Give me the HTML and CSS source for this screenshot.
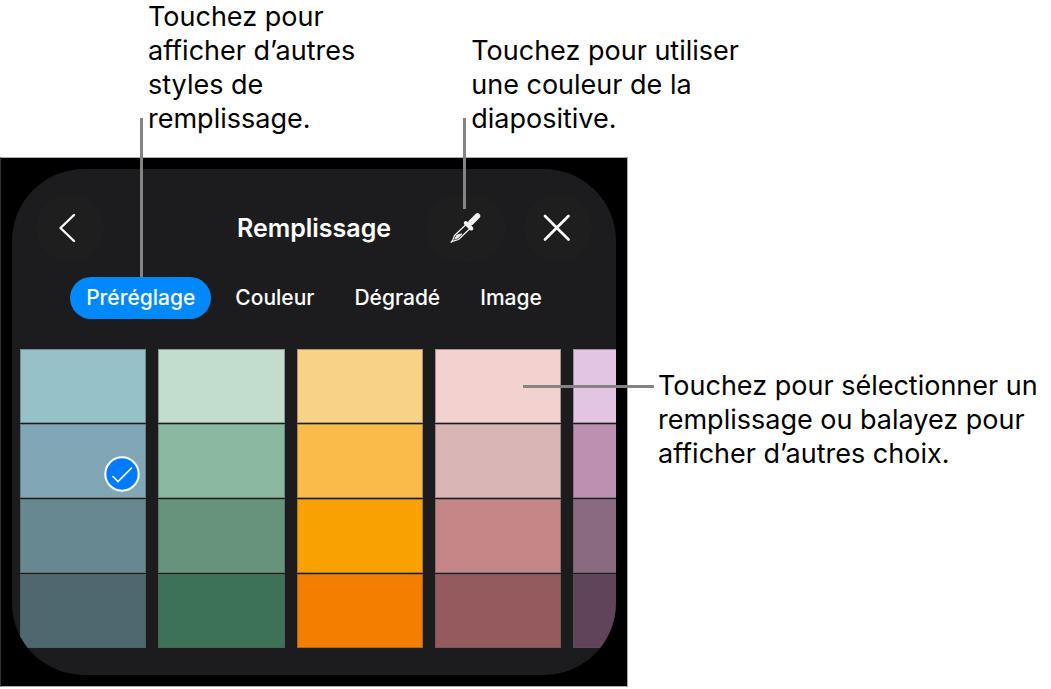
FILE: index.html
```html
<!DOCTYPE html>
<html lang="fr">
<head>
    <meta charset="utf-8">
    <title>Remplissage</title>
    <link rel="stylesheet" href="styles.css">
</head>
<body>
    <div class="figure">
        <div class="top-notes">
            <p class="note note-styles">Touchez pour<br>afficher d’autres<br>styles de<br>remplissage.</p>
            <p class="note note-picker">Touchez pour utiliser<br>une couleur de la<br>diapositive.</p>
        </div>

        <div class="device">
            <div class="sheet">
                <div class="header">
                    <button class="round-btn" aria-label="Retour">
                        <svg width="68" height="68" viewBox="0 0 68 68" fill="none" stroke="#fff" stroke-width="2.4" stroke-linecap="round" stroke-linejoin="round">
                            <path d="M38 21L24.500 34L38 47"/>
                        </svg>
                    </button>
                    <h1 class="title">Remplissage</h1>
                    <div class="header-actions">
                        <button class="round-btn picker-btn" aria-label="Pipette">
                            <svg width="80" height="68" viewBox="0 0 80 68" fill="none" stroke="#f4f4f4" stroke-linecap="round" stroke-linejoin="round">
                                <path d="M45 28.500L51.500 22" stroke-width="5.500"/>
                                <path d="M39.800 29L45.300 34.500" stroke-width="4"/>
                                <path d="M39.500 31L28.500 41.500L27 45.500L25 48.300L28 46.800L32.500 45.500L43.500 35" stroke-width="1.200"/>
                                <path d="M28.800 44.800L31 41L36 39.800L32 43.800Z" fill="#f4f4f4" stroke-width="0.800"/>
                            </svg>
                        </button>
                        <button class="round-btn" aria-label="Fermer">
                            <svg width="68" height="68" viewBox="0 0 68 68" fill="none" stroke="#fff" stroke-width="2.700" stroke-linecap="round">
                                <path d="M21 22L44.500 45.500M44.500 22L21 45.500"/>
                            </svg>
                        </button>
                    </div>
                </div>

                <div class="tabs">
                    <button class="tab active">Préréglage</button>
                    <button class="tab">Couleur</button>
                    <button class="tab">Dégradé</button>
                    <button class="tab">Image</button>
                </div>

                <div class="swatches">
                    <div class="column">
                        <button class="swatch blue-1" aria-label="Bleu 1"></button>
                        <button class="swatch blue-2" aria-label="Bleu 2">
                            <svg class="check" width="36" height="36" viewBox="0 0 36 36" fill="none" stroke="#fff">
                                <circle cx="18" cy="18" r="16.700" fill="#007bff" stroke-width="2"/>
                                <path d="M9 20.500L14 25.500L27.500 12" stroke-width="1.600" stroke-linecap="round"/>
                            </svg>
                        </button>
                        <button class="swatch blue-3" aria-label="Bleu 3"></button>
                        <button class="swatch blue-4" aria-label="Bleu 4"></button>
                    </div>
                    <div class="column">
                        <button class="swatch green-1" aria-label="Vert 1"></button>
                        <button class="swatch green-2" aria-label="Vert 2"></button>
                        <button class="swatch green-3" aria-label="Vert 3"></button>
                        <button class="swatch green-4" aria-label="Vert 4"></button>
                    </div>
                    <div class="column">
                        <button class="swatch orange-1" aria-label="Orange 1"></button>
                        <button class="swatch orange-2" aria-label="Orange 2"></button>
                        <button class="swatch orange-3" aria-label="Orange 3"></button>
                        <button class="swatch orange-4" aria-label="Orange 4"></button>
                    </div>
                    <div class="column">
                        <button class="swatch red-1" aria-label="Rouge 1"></button>
                        <button class="swatch red-2" aria-label="Rouge 2"></button>
                        <button class="swatch red-3" aria-label="Rouge 3"></button>
                        <button class="swatch red-4" aria-label="Rouge 4"></button>
                    </div>
                    <div class="column">
                        <button class="swatch purple-1" aria-label="Violet 1"></button>
                        <button class="swatch purple-2" aria-label="Violet 2"></button>
                        <button class="swatch purple-3" aria-label="Violet 3"></button>
                        <button class="swatch purple-4" aria-label="Violet 4"></button>
                    </div>
                </div>
            </div>
        </div>

        <p class="note note-swatch">Touchez pour sélectionner un<br>remplissage ou balayez pour<br>afficher d’autres choix.</p>
    </div>
</body>
</html>
```
FILE: styles.css
```css
* {
    box-sizing: border-box;
}
body {
    margin: 0;
    background: #fff;
    color: #000;
    font-family: Inter, "Liberation Sans", sans-serif;
}
button {
    padding: 0;
    border: none;
    color: #fff;
    font-family: inherit;
    cursor: pointer;
}
.figure {
    display: grid;
    grid-template-columns: minmax(0, 628px) 1fr;
    align-items: start;
}

/* Callouts */
.top-notes {
    grid-column: 1 / -1;
    display: flex;
    align-items: flex-end;
    gap: 116px;
    padding: 0 0 21px 148px;
}
.note {
    position: relative;
    margin: 0;
    font-size: 27px;
    line-height: 34px;
    white-space: nowrap;
}
.note::before {
    content: "";
    position: absolute;
    z-index: 1;
    background: #848484;
}
.note-styles::before {
    left: -8px;
    top: calc(100% - 18px);
    width: 3px;
    height: 159px;
}
.note-picker::before {
    left: -8px;
    top: calc(100% - 18px);
    width: 3px;
    height: 91px;
}
.note-swatch {
    margin-top: 212px;
    padding-left: 30px;
}
.note-swatch::before {
    left: -105px;
    top: 16px;
    width: 131px;
    height: 3px;
}

/* Panel */
.device {
    padding: 11px;
    background: #000;
    border: 1px solid #aaa;
    border-left-color: #333;
}
.sheet {
    overflow: hidden;
    padding: 25px 0 27px;
    background: #1c1c1e;
    border-radius: 72px;
}
.header {
    display: grid;
    grid-template-columns: 1fr auto 1fr;
    align-items: center;
    padding: 0 24px;
}
.title {
    margin: 0;
    color: #fff;
    font-size: 25px;
    font-weight: 600;
    line-height: 32px;
}
.header-actions {
    display: flex;
    justify-content: flex-end;
    gap: 18px;
}
.round-btn {
    width: 68px;
    height: 68px;
    background: #1e1e1e;
    border-radius: 34px;
}
.round-btn svg {
    display: block;
}
.picker-btn {
    width: 80px;
}
.tabs {
    display: flex;
    justify-content: center;
    gap: 8px;
    margin: 15px 0 30px;
}
.tab {
    height: 42px;
    padding: 0 16px 2px;
    background: none;
    border-radius: 21px;
    font-size: 21px;
    font-weight: 500;
}
.tab.active {
    background: #0088ff;
}

/* Colour grid */
.swatches {
    display: flex;
    gap: 12px;
    margin-left: 8px;
    overflow: hidden;
}
.column {
    display: flex;
    flex: 0 0 21.2%;
    flex-direction: column;
    gap: 1px;
}
.swatch {
    position: relative;
    height: 74px;
    border: 1px solid rgba(85, 85, 85, 0.5);
}
.check {
    position: absolute;
    right: 5px;
    bottom: 5px;
}
.blue-1 { background: #95c2c9; }
.blue-2 { background: #81a6b5; }
.blue-3 { background: #678891; }
.blue-4 { background: #4f676e; }
.green-1 { background: #c2dccd; }
.green-2 { background: #8ab8a1; }
.green-3 { background: #67937b; }
.green-4 { background: #3d7256; }
.orange-1 { background: #f7d287; }
.orange-2 { background: #fabb4b; }
.orange-3 { background: #f8a100; }
.orange-4 { background: #f47e00; }
.red-1 { background: #f3d1cf; }
.red-2 { background: #dab5b5; }
.red-3 { background: #c48686; }
.red-4 { background: #945a5d; }
.purple-1 { background: #e2c5e2; }
.purple-2 { background: #bd90b1; }
.purple-3 { background: #8a6a80; }
.purple-4 { background: #60445a; }
```
